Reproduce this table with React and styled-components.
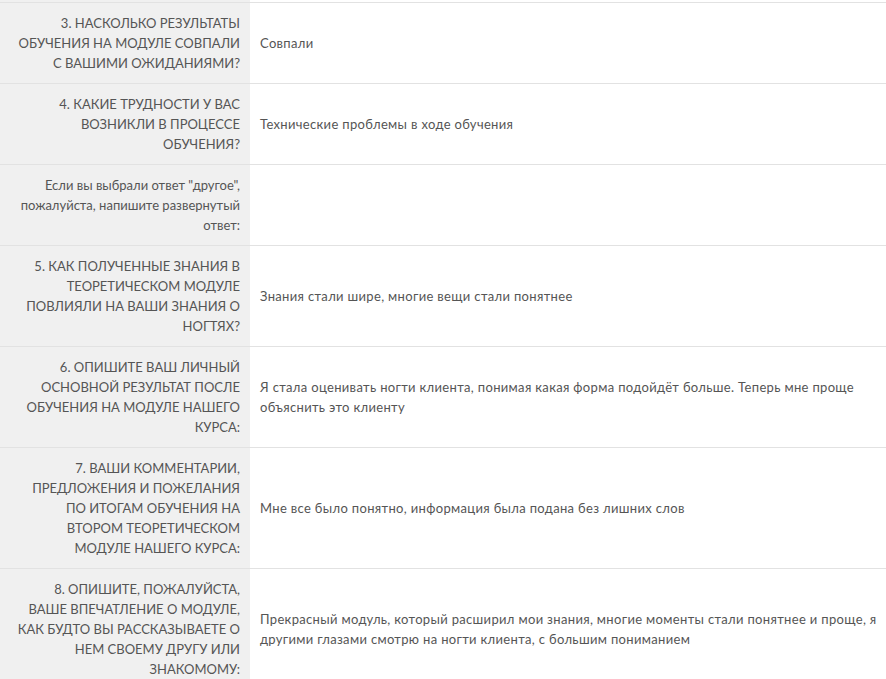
import styled, { createGlobalStyle } from "styled-components";

const Global = createGlobalStyle`
  html, body {
    margin: 0;
    padding: 0;
    background: #fff;
  }
  body {
    font-family: "Lato", "Open Sans", "Liberation Sans", sans-serif;
  }
`;

const Table = styled.div`
  width: 886px;
  display: flex;
  flex-direction: column;
`;

const Row = styled.div`
  display: grid;
  grid-template-columns: 250px 1fr;
  border-top: 1px solid #e2e2e2;

  &:first-child {
    border-top: none;
  }
`;

const Label = styled.div`
  background: #f0f0f0;
  padding: ${(p) => (p.$stub ? "0" : "10px 10px 10px 15px")};
  height: ${(p) => (p.$stub ? "2px" : "auto")};
  text-align: right;
  font-size: 13px;
  line-height: 20px;
  color: #555;
  text-transform: ${(p) => (p.$plain ? "none" : "uppercase")};
`;

const Value = styled.div`
  padding: 10px 4px 10px 10px;
  display: flex;
  align-items: center;
  font-size: 13px;
  line-height: 20px;
  letter-spacing: 0.33px;
  color: #555;
`;

const rows = [
  {
    q: "3. Насколько результаты обучения на модуле совпали с вашими ожиданиями?",
    a: "Совпали",
  },
  {
    q: "4. Какие трудности у вас возникли в процессе обучения?",
    a: "Технические проблемы в ходе обучения",
  },
  {
    q: 'Если вы выбрали ответ "другое", пожалуйста, напишите развернутый ответ:',
    a: "",
    plain: true,
  },
  {
    q: "5. Как полученные знания в теоретическом модуле повлияли на ваши знания о ногтях?",
    a: "Знания стали шире, многие вещи стали понятнее",
  },
  {
    q: "6. Опишите ваш личный основной результат после обучения на модуле нашего курса:",
    a: "Я стала оценивать ногти клиента, понимая какая форма подойдёт больше. Теперь мне проще объяснить это клиенту",
  },
  {
    q: "7. Ваши комментарии, предложения и пожелания по итогам обучения на втором теоретическом модуле нашего курса:",
    a: "Мне все было понятно, информация была подана без лишних слов",
  },
  {
    q: "8. Опишите, пожалуйста, ваше впечатление о модуле, как будто вы рассказываете о нем своему другу или знакомому:",
    a: "Прекрасный модуль, который расширил мои знания, многие моменты стали понятнее и проще, я другими глазами смотрю на ногти клиента, с большим пониманием",
  },
];

export default function App() {
  return (
    <>
      <Global />
      <Table>
        <Row>
          <Label $stub />
          <div />
        </Row>
        {rows.map((r, i) => (
          <Row key={i}>
            <Label $plain={r.plain}>{r.q}</Label>
            <Value>{r.a}</Value>
          </Row>
        ))}
      </Table>
    </>
  );
}
